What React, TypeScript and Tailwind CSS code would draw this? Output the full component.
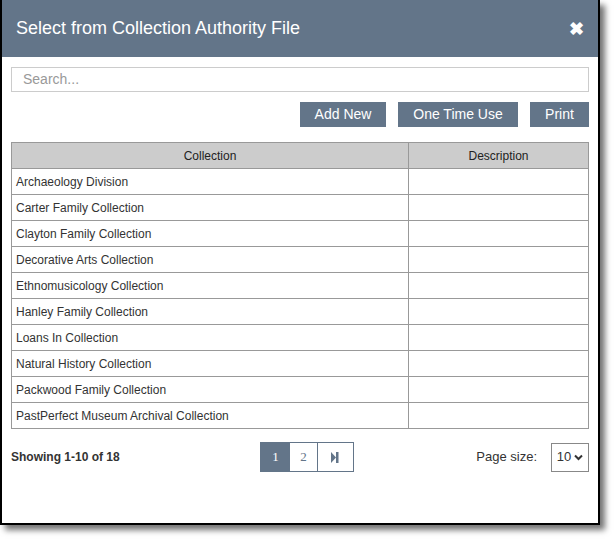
const rows = [
  "Archaeology Division",
  "Carter Family Collection",
  "Clayton Family Collection",
  "Decorative Arts Collection",
  "Ethnomusicology Collection",
  "Hanley Family Collection",
  "Loans In Collection",
  "Natural History Collection",
  "Packwood Family Collection",
  "PastPerfect Museum Archival Collection",
];

export default function App() {
  return (
    <div className="h-[539px] w-[614px] bg-white font-['Liberation_Sans',Arial,sans-serif]">
      <div className="flex h-[525px] w-[600px] flex-col border-x-2 border-b-2 border-black bg-white shadow-[5px_5px_6px_rgba(0,0,0,0.55)]">
        <div className="flex h-[57px] shrink-0 items-center justify-between bg-[#637589] pl-[14px] pr-[14px] text-white">
          <span className="text-[18px]">Select from Collection Authority File</span>
          <span className="text-[18px] font-bold leading-none">✖</span>
        </div>
        <div className="flex flex-col px-[9px] pt-[10px]">
          <div className="flex h-[25px] items-center border border-[#cccccc] px-[11px] text-[14px] text-[#999999]">
            Search...
          </div>
          <div className="mt-[10px] flex justify-end gap-[12px]">
            <button className="h-[25px] w-[86px] bg-[#637589] text-[14px] text-white">Add New</button>
            <button className="h-[25px] w-[120px] bg-[#637589] text-[14px] text-white">One Time Use</button>
            <button className="h-[25px] w-[59px] bg-[#637589] text-[14px] text-white">Print</button>
          </div>
          <table className="mt-[15px] w-full border-collapse text-[12px] text-[#333333]">
            <thead>
              <tr className="h-[26px] bg-[#cccccc]">
                <th className="border border-[#999999] font-normal text-[#222222]">Collection</th>
                <th className="w-[180px] border border-[#999999] font-normal text-[#222222]">Description</th>
              </tr>
            </thead>
            <tbody>
              {rows.map((r) => (
                <tr key={r} className="h-[26px]">
                  <td className="border border-[#999999] px-[4px]">{r}</td>
                  <td className="border border-[#999999]"></td>
                </tr>
              ))}
            </tbody>
          </table>
          <div className="mt-[13px] grid grid-cols-3 items-center">
            <span className="text-[12px] font-bold text-[#333333]">Showing 1-10 of 18</span>
            <div className="flex justify-center pl-[14px]">
              <div className="flex h-[30px] border border-[#637589] font-['Liberation_Serif',serif] text-[13px]">
                <span className="flex w-[29px] items-center justify-center bg-[#637589] text-white">1</span>
                <span className="flex w-[28px] items-center justify-center border-r border-[#637589] text-[#637589]">2</span>
                <span className="flex w-[35px] items-center justify-center text-[#637589]">
                  <svg width="8" height="11" viewBox="0 0 8 11">
                    <path d="M0 0L5 5.5L0 11Z" fill="#637589" />
                    <rect x="5" y="0" width="2.5" height="11" fill="#637589" />
                  </svg>
                </span>
              </div>
            </div>
            <div className="flex items-center justify-end gap-[14px] text-[13px] text-[#333333]">
              <span>Page size:</span>
              <div className="flex h-[29px] w-[38px] items-center justify-center gap-[3px] border border-[#888888] text-[13px]">
                10
                <svg width="9" height="7" viewBox="0 0 9 7">
                  <path d="M1 1.5L4.5 5L8 1.5" stroke="#333" strokeWidth="2" fill="none" />
                </svg>
              </div>
            </div>
          </div>
        </div>
      </div>
    </div>
  );
}
